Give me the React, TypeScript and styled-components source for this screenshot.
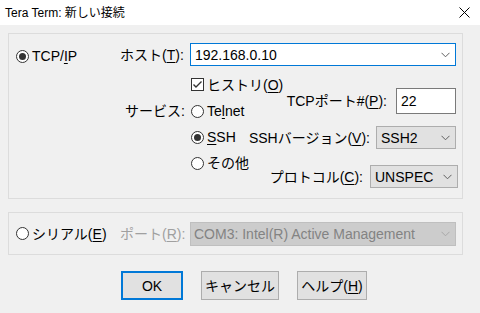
import React from "react";
import styled, { createGlobalStyle } from "styled-components";

const Global = createGlobalStyle`
  html, body { margin: 0; padding: 0; background: #f0f0f0; }
  body {
    font-family: "Liberation Sans", "Noto Sans CJK JP", sans-serif;
    font-size: 14px;
    color: #000;
  }
  * { box-sizing: border-box; }
`;

const Window = styled.div`
  width: 480px;
  height: 313px;
  background: #f0f0f0;
  overflow: hidden;
  display: flex;
  flex-direction: column;
`;

const TitleBar = styled.div`
  height: 25px;
  background: #fff;
  display: flex;
  align-items: center;
  justify-content: space-between;
  padding: 0 10px 0 5px;
  font-size: 12px;
  line-height: 14px;
`;

const Body = styled.div`
  padding: 0 0 0 8px;
  display: flex;
  flex-direction: column;
`;

const Group = styled.div<{ $top: number; $height: number; $center?: boolean }>`
  margin-top: ${(p) => p.$top}px;
  width: 455px;
  height: ${(p) => p.$height}px;
  border: 1px solid #dcdcdc;
  display: flex;
  align-items: ${(p) => (p.$center ? "center" : "flex-start")};
`;

const LeftCol = styled.div<{ $top?: number }>`
  width: 111px;
  padding-left: 7px;
  padding-top: ${(p) => p.$top ?? 0}px;
  flex: none;
`;

const MainCol = styled.div`
  display: flex;
  flex-direction: column;
`;

const Line = styled.div<{ $h: number; $top?: number; $left?: number; $right?: number; $gap?: number; $end?: boolean }>`
  display: flex;
  align-items: center;
  height: ${(p) => p.$h}px;
  margin-top: ${(p) => p.$top ?? 0}px;
  margin-left: ${(p) => p.$left ?? 0}px;
  padding-right: ${(p) => p.$right ?? 0}px;
  gap: ${(p) => p.$gap ?? 0}px;
  justify-content: ${(p) => (p.$end ? "flex-end" : "flex-start")};
  white-space: nowrap;
  line-height: 16px;
`;

const Label = styled.span<{ $w?: number; $disabled?: boolean; $mr?: number }>`
  display: inline-block;
  width: ${(p) => (p.$w ? `${p.$w}px` : "auto")};
  text-align: right;
  margin-right: ${(p) => p.$mr ?? 0}px;
  color: ${(p) => (p.$disabled ? "#a0a0a0" : "#000")};
  white-space: nowrap;
  flex: none;
`;

const U = styled.u`
  text-decoration-thickness: 1px;
  text-underline-offset: 2px;
`;

const RadioCircle = styled.span<{ $checked?: boolean }>`
  width: 13px;
  height: 13px;
  border-radius: 50%;
  border: 1px solid #333;
  background: #fff;
  display: inline-flex;
  align-items: center;
  justify-content: center;
  flex: none;
  margin-right: 3px;
  &::after {
    content: "";
    width: 7px;
    height: 7px;
    border-radius: 50%;
    background: ${(p) => (p.$checked ? "#333" : "transparent")};
  }
`;

const CheckBox = styled.span`
  width: 13px;
  height: 13px;
  border: 1px solid #333;
  background: #fff;
  display: inline-flex;
  align-items: center;
  justify-content: center;
  flex: none;
  margin-right: 3px;
`;

const Field = styled.div<{ $w: number; $h: number; $kind: "combo" | "edit" | "select" | "disabled" }>`
  width: ${(p) => p.$w}px;
  height: ${(p) => p.$h}px;
  flex: none;
  display: flex;
  align-items: center;
  justify-content: space-between;
  padding: 0 5px 0 ${(p) => (p.$kind === "disabled" ? 3 : 4)}px;
  line-height: 16px;
  white-space: nowrap;
  overflow: hidden;
  background: ${(p) =>
    p.$kind === "combo" || p.$kind === "edit" ? "#fff" : p.$kind === "select" ? "#e1e1e1" : "#cccccc"};
  border: 1px solid
    ${(p) =>
      p.$kind === "combo" ? "#0078d7" : p.$kind === "edit" ? "#7a7a7a" : p.$kind === "select" ? "#adadad" : "#bfbfbf"};
  color: ${(p) => (p.$kind === "disabled" ? "#838383" : "#000")};
`;

const ServiceWrap = styled.div`
  display: flex;
  margin-top: 7px;
`;

const RadioList = styled.div`
  display: flex;
  flex-direction: column;
`;

const Lower = styled.div`
  display: flex;
`;

const SubCol = styled.div<{ $w: number }>`
  width: ${(p) => p.$w}px;
  display: flex;
  flex-direction: column;
  flex: none;
`;

const ButtonBar = styled.div`
  display: flex;
  gap: 18px;
  margin-top: 16px;
  padding-left: 113px;
`;

const Button = styled.div<{ $w: number; $default?: boolean }>`
  width: ${(p) => p.$w}px;
  height: 29px;
  background: #e1e1e1;
  border: ${(p) => (p.$default ? "2px solid #0078d7" : "1px solid #adadad")};
  display: flex;
  align-items: center;
  justify-content: center;
  white-space: nowrap;
  line-height: 16px;
`;

const Chevron = ({ color = "#606060" }: { color?: string }) => (
  <svg width="9" height="6" viewBox="0 0 9 6" style={{ flex: "none" }}>
    <polyline points="0.5,0.8 4.5,4.8 8.5,0.8" fill="none" stroke={color} strokeWidth="1" />
  </svg>
);

const CloseIcon = () => (
  <svg width="11" height="11" viewBox="0 0 11 11">
    <path d="M0.5 0.5 L10.5 10.5 M10.5 0.5 L0.5 10.5" stroke="#000" strokeWidth="1" fill="none" />
  </svg>
);

const Check = () => (
  <svg width="11" height="11" viewBox="0 0 11 11">
    <polyline points="1.5,5.5 4,8 9.5,2.5" fill="none" stroke="#333" strokeWidth="1.4" />
  </svg>
);

export default function App() {
  return (
    <>
      <Global />
      <Window>
        <TitleBar>
          <span>Tera Term: 新しい接続</span>
          <CloseIcon />
        </TitleBar>
        <Body>
          <Group $top={8} $height={166}>
            <LeftCol $top={12}>
              <Line $h={20}>
                <RadioCircle $checked />
                <span>
                  TCP/<U>I</U>P
                </span>
              </Line>
            </LeftCol>
            <MainCol>
              <Line $h={23} $top={9}>
                <Label $w={63} $mr={7}>
                  ホスト(<U>T</U>):
                </Label>
                <Field $w={266} $h={23} $kind="combo">
                  <span>192.168.0.10</span>
                  <Chevron />
                </Field>
              </Line>
              <Lower>
                <SubCol $w={128}>
                  <Line $h={13} $top={12} $left={71}>
                    <CheckBox>
                      <Check />
                    </CheckBox>
                    <span>
                      ヒストリ(<U>O</U>)
                    </span>
                  </Line>
                  <ServiceWrap>
                    <Line $h={26}>
                      <Label $w={65} $mr={6}>
                        サービス:
                      </Label>
                    </Line>
                    <RadioList>
                      <Line $h={26}>
                        <RadioCircle />
                        <span>
                          Te<U>l</U>net
                        </span>
                      </Line>
                      <Line $h={26}>
                        <RadioCircle $checked />
                        <span>
                          <U>S</U>SH
                        </span>
                      </Line>
                      <Line $h={26}>
                        <RadioCircle />
                        <span>その他</span>
                      </Line>
                    </RadioList>
                  </ServiceWrap>
                </SubCol>
                <SubCol $w={210}>
                  <Line $h={26} $top={22} $right={2} $gap={9} $end>
                    <Label>
                      TCPポート#(<U>P</U>):
                    </Label>
                    <Field $w={60} $h={26} $kind="edit">
                      <span>22</span>
                    </Field>
                  </Line>
                  <Line $h={23} $top={12} $right={2} $gap={6} $end>
                    <Label>
                      SSHバージョン(<U>V</U>):
                    </Label>
                    <Field $w={80} $h={23} $kind="select">
                      <span>SSH2</span>
                      <Chevron />
                    </Field>
                  </Line>
                  <Line $h={23} $top={16} $right={0} $gap={7} $end>
                    <Label>
                      プロトコル(<U>C</U>):
                    </Label>
                    <Field $w={88} $h={23} $kind="select">
                      <span>UNSPEC</span>
                      <Chevron />
                    </Field>
                  </Line>
                </SubCol>
              </Lower>
            </MainCol>
          </Group>
          <Group $top={13} $height={43} $center>
            <LeftCol>
              <Line $h={20}>
                <RadioCircle />
                <span>
                  シリアル(<U>E</U>)
                </span>
              </Line>
            </LeftCol>
            <Line $h={24}>
              <Label $w={64} $mr={6} $disabled>
                ポート(<U>R</U>):
              </Label>
              <Field $w={266} $h={24} $kind="disabled">
                <span>COM3: Intel(R) Active Management</span>
                <Chevron color="#a8a8a8" />
              </Field>
            </Line>
          </Group>
          <ButtonBar>
            <Button $w={62} $default>
              OK
            </Button>
            <Button $w={78}>キャンセル</Button>
            <Button $w={70}>
              ヘルプ(<U>H</U>)
            </Button>
          </ButtonBar>
        </Body>
      </Window>
    </>
  );
}
